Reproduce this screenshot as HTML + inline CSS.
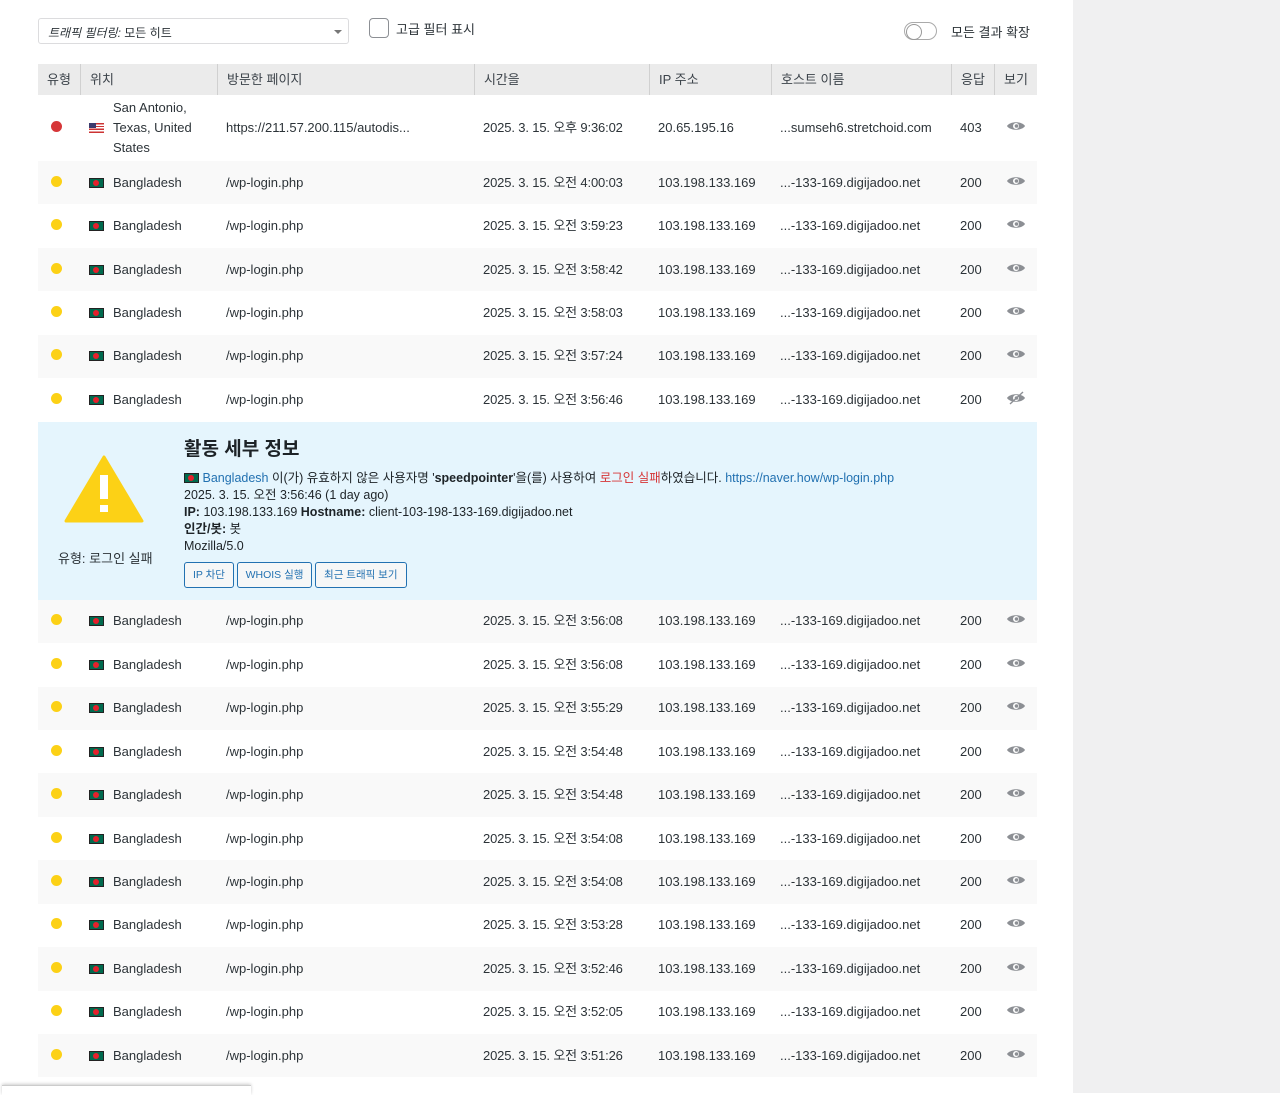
<!DOCTYPE html>
<html><head><meta charset="utf-8"><style>
*{box-sizing:border-box;margin:0;padding:0}
body{width:1280px;height:1093px;overflow:hidden;background:#fff;font-family:"Liberation Sans","Noto Sans CJK KR",sans-serif;font-size:13px;color:#2c3338;position:relative}
.side{position:absolute;left:1073px;top:0;width:207px;height:1093px;background:#f0f0f1}
.sel{position:absolute;left:38px;top:18px;width:311px;height:26px;border:1px solid #dcdcde;border-radius:3px;padding:5px 9px;font-size:12px}
.sel:after{content:"";position:absolute;right:6px;top:11px;border:4px solid transparent;border-top:4px solid #777}
.cb{position:absolute;left:369px;top:18px;width:20px;height:20px;border:1px solid #8c8f94;border-radius:4px}
.cbl{position:absolute;left:396px;top:19px;font-size:13px}
.tog{position:absolute;left:904px;top:22px;width:33px;height:18px;border:1px solid #aaa;border-radius:9px}
.tog:after{content:"";position:absolute;left:1px;top:1px;width:14px;height:14px;border-radius:50%;border:1px solid #999;background:#fff}
.togl{position:absolute;left:951px;top:22px}
.tbl{position:absolute;left:38px;top:64px;width:999px}
.row{position:relative;height:43.45px;display:flex;align-items:center;line-height:16px}
.row>div{flex:none;padding-left:9px}
.hd{height:31px;background:#ebebeb;color:#3c434a}
.hd>div{border-left:1px solid #d0d0d0;height:31px;line-height:31px}
.hd>div:first-child{border-left:none}
.g{background:#f9f9f9}
.c1{width:42px}.c2{width:137px}.c3{width:257px}.c4{width:175px}.c5{width:122px}.c6{width:180px}.c7{width:43px}.c8{width:43px}
.c4{letter-spacing:-0.15px}
.dot{display:inline-block;width:11px;height:11px;border-radius:50%;background:#fcd116;margin-left:4px}
.red{background:#d63638}
.bd{display:inline-block;width:15px;height:10px;background:#006a4e;border:1px solid #222;position:relative;vertical-align:middle}
.bd:after{content:"";position:absolute;left:3px;top:1px;width:6px;height:6px;border-radius:50%;background:#e4202c}
.us{display:inline-block;width:15px;height:10px;vertical-align:middle;background:repeating-linear-gradient(#c33 0 1.4px,#fff 1.4px 2.8px);position:relative}
.us:after{content:"";position:absolute;left:0;top:0;width:7px;height:5px;background:#3c3b6e}
.loc{display:flex;align-items:center;gap:9px}
.panel{height:178px;background:#e5f5fd;position:relative}
.btn{display:inline-block;border:1px solid #2271b1;color:#2271b1;border-radius:3px;height:26px;line-height:24px;padding:0 8px;font-size:10.5px;background:#f6f7f7;margin-right:-1px}
.foot{position:absolute;left:2px;top:1085px;width:249px;height:10px;border-top:1px solid #ccc;box-shadow:0 -1px 3px rgba(0,0,0,.2);background:#fff}
</style></head><body>
<div class="side"></div>
<div class="sel"><i>트래픽 필터링:</i> 모든 히트</div>
<div class="cb"></div><div class="cbl">고급 필터 표시</div>
<div class="tog"></div><div class="togl">모든 결과 확장</div>
<svg width="0" height="0" style="position:absolute"><defs><g id="eye"><path d="M1 6C4 1 16 1 19 6C16 11 4 11 1 6Z" fill="#8c8f94"/><circle cx="10" cy="6" r="3" fill="#fff"/><circle cx="10.5" cy="6" r="1.8" fill="#8c8f94"/></g></defs></svg>
<div class="tbl">
<div class="row hd"><div class="c1">유형</div><div class="c2">위치</div><div class="c3">방문한 페이지</div><div class="c4">시간을</div><div class="c5">IP 주소</div><div class="c6">호스트 이름</div><div class="c7">응답</div><div class="c8">보기</div></div>
<div class="row" style="height:66px"><div class="c1"><span class="dot red"></span></div><div class="c2 loc"><span class="us"></span><span style="line-height:20px">San Antonio,<br>Texas, United<br>States</span></div><div class="c3">https://211.57.200.115/autodis...</div><div class="c4">2025. 3. 15. 오후 9:36:02</div><div class="c5">20.65.195.16</div><div class="c6">...sumseh6.stretchoid.com</div><div class="c7">403</div><div class="c8" style="padding-left:12px"><svg width="20" height="12"><use href="#eye"/></svg></div></div>
<div id="r1"></div>
</div>
<div class="foot"></div>
<script>
var times1=["4:00:03","3:59:23","3:58:42","3:58:03","3:57:24","3:56:46"];
var times2=["3:56:08","3:56:08","3:55:29","3:54:48","3:54:48","3:54:08","3:54:08","3:53:28","3:52:46","3:52:05","3:51:26"];
function row(t,g,slash){return '<div class="row'+(g?' g':'')+'"><div class="c1"><span class="dot"></span></div><div class="c2 loc"><span class="bd"></span><span>Bangladesh</span></div><div class="c3">/wp-login.php</div><div class="c4">2025. 3. 15. 오전 '+t+'</div><div class="c5">103.198.133.169</div><div class="c6">...-133-169.digijadoo.net</div><div class="c7">200</div><div class="c8" style="padding-left:12px"><svg width="20" height="14"><use href="#eye" y="1"/>'+(slash?'<line x1="4" y1="13" x2="17" y2="1" stroke="#8c8f94" stroke-width="1.4"/>':'')+'</svg></div></div>';}
var h='';
times1.forEach(function(t,i){h+=row(t,i%2==0,i==5);});
h+='<div class="panel"><svg style="position:absolute;left:26px;top:33px" width="80" height="68"><path d="M40 2L78 66H2Z" fill="#fcd116" stroke="#fcd116" stroke-width="3" stroke-linejoin="round"/><rect x="36" y="20" width="8" height="24" fill="#fff"/><rect x="36" y="50" width="8" height="7" fill="#fff"/></svg><div style="position:absolute;left:20px;top:126px">유형: 로그인 실패</div>'+
'<div style="position:absolute;left:146px;top:12px;font-size:19px;font-weight:bold;color:#1d2327">활동 세부 정보</div>'+
'<div style="position:absolute;left:146px;top:48px;line-height:17px;font-size:12.5px;color:#1d2327"><span class="bd"></span> <span style="color:#2271b1">Bangladesh</span> 이(가) 유효하지 않은 사용자명 \'<b>speedpointer</b>\'을(를) 사용하여 <span style="color:#d63638">로그인 실패</span>하였습니다. <span style="color:#2271b1">https://naver.how/wp-login.php</span><br>2025. 3. 15. 오전 3:56:46 (1 day ago)<br><b>IP:</b> 103.198.133.169 <b>Hostname:</b> client-103-198-133-169.digijadoo.net<br><b>인간/봇:</b> 봇<br>Mozilla/5.0</div>'+
'<div style="position:absolute;left:146px;top:140px"><span class="btn">IP 차단</span> <span class="btn">WHOIS 실행</span> <span class="btn">최근 트래픽 보기</span></div></div>';
times2.forEach(function(t,i){h+=row(t,i%2==0,false);});
document.getElementById('r1').outerHTML=h;
</script>
</body></html>
